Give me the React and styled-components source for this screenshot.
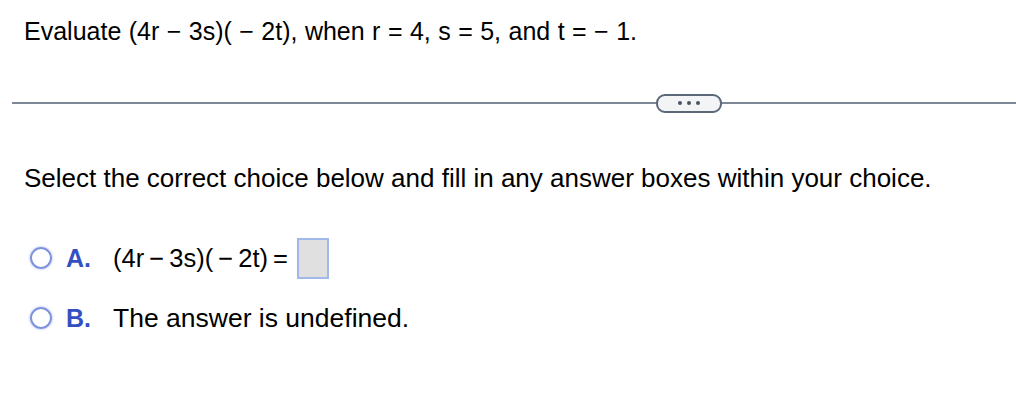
import React from 'react'
import styled, { createGlobalStyle } from 'styled-components'

const Global = createGlobalStyle`
  body {
    margin: 0;
    background: #fff;
    font-family: "Liberation Sans", Arial, sans-serif;
    color: #000;
  }
`;

export default function App() {
  return (
    <Page>
      <Global />
      <Question>
        Evaluate (4r − 3s)( − 2t), when r = 4, s = 5, and t =  − 1.
      </Question>
      <Divider>
        <Pill>
          <Dot /><Dot /><Dot />
        </Pill>
      </Divider>
      <Prompt>Select the correct choice below and fill in any answer boxes within your choice.</Prompt>
      <Choices>
        <Choice>
          <Radio />
          <Letter>A.</Letter>
          <Math>(4r − 3s)( − 2t) =</Math>
          <AnswerBox />
        </Choice>
        <Choice>
          <Radio />
          <Letter>B.</Letter>
          <ChoiceText>The answer is undefined.</ChoiceText>
        </Choice>
      </Choices>
    </Page>
  )
}

const Page = styled.div`
  width: 1016px;
  height: 408px;
  box-sizing: border-box;
  padding-top: 16px;
`;

const Question = styled.div`
  padding-left: 24px;
  font-size: 25px;
  line-height: 30px;
  word-spacing: 0.5px;
`;

const Divider = styled.div`
  margin: 56px 0 0 12px;
  height: 2px;
  background: #7d8795;
  display: flex;
  align-items: center;
`;

const Pill = styled.div`
  margin-left: 644px;
  width: 62px;
  height: 15px;
  border: 2px solid #5a6878;
  border-radius: 9px;
  background: #f3f4f6;
  display: flex;
  align-items: center;
  justify-content: center;
  gap: 5px;
`;

const Dot = styled.span`
  width: 4px;
  height: 4px;
  border-radius: 50%;
  background: #4a5563;
`;

const Prompt = styled.div`
  margin-top: 59px;
  padding-left: 24px;
  font-size: 26px;
  line-height: 30px;
`;

const Choices = styled.div`
  margin-top: 43px;
  padding-left: 30px;
  display: flex;
  flex-direction: column;
  gap: 16px;
`;

const Choice = styled.div`
  display: flex;
  align-items: center;
  height: 44px;
`;

const Radio = styled.span`
  width: 22px;
  height: 22px;
  box-sizing: border-box;
  border-radius: 50%;
  border: 2px solid #7f92dc;
  box-shadow: 0 0 2px 1px rgba(170, 185, 235, 0.45);
  flex: none;
`;

const Letter = styled.span`
  margin-left: 14px;
  width: 47px;
  font-size: 25px;
  font-weight: bold;
  color: #3350c2;
`;

const Math = styled.span`
  font-size: 25.5px;
  word-spacing: -2px;
`;

const AnswerBox = styled.span`
  margin-left: 9px;
  width: 32px;
  height: 41px;
  box-sizing: border-box;
  border: 2px solid #a3b8ea;
  background: #e0e0e0;
`;

const ChoiceText = styled.span`
  font-size: 26.5px;
`;
